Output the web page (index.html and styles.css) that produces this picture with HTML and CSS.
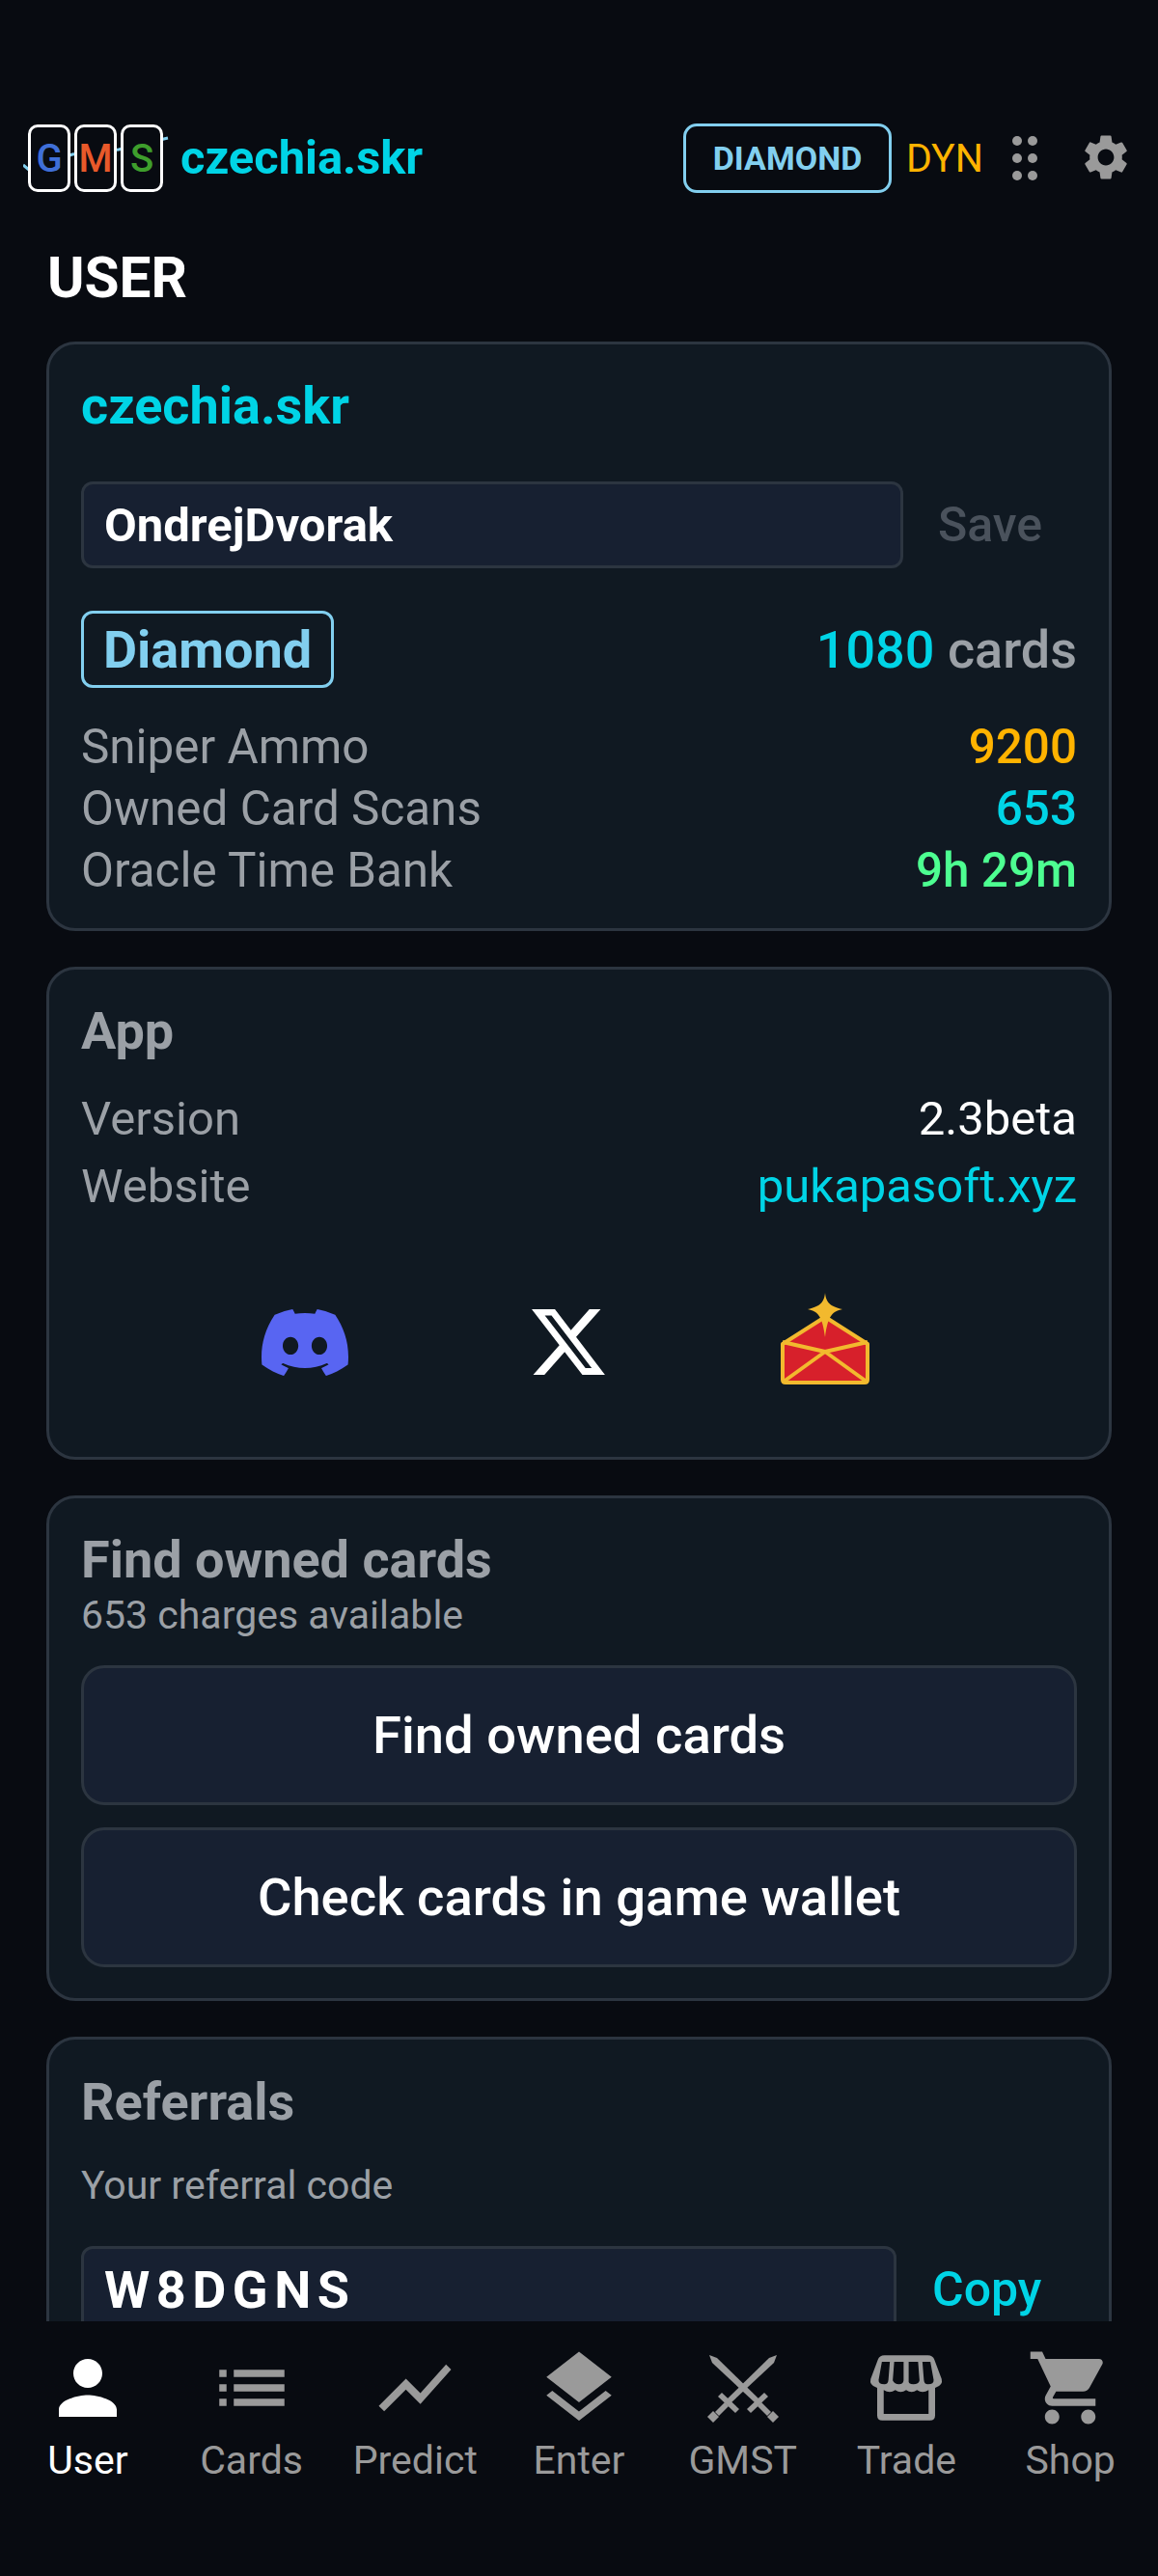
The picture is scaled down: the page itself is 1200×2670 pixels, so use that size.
FILE: index.html
```html
<!DOCTYPE html>
<html lang="en">
<head>
<meta charset="utf-8">
<title>USER</title>
<link rel="stylesheet" href="styles.css">
</head>
<body>
<div class="app">
  <header class="topbar">
    <div class="logo">
      <svg class="logo-line" viewBox="0 0 156 40"><path d="M0 30 L6 35 L51 19 L99 14 L150 2" fill="none" stroke="#82cfef" stroke-width="3"/></svg>
      <span class="tile tile-g">G</span><span class="tile tile-m">M</span><span class="tile tile-s">S</span>
    </div>
    <span class="brand">czechia.skr</span>
    <span class="tier">DIAMOND</span>
    <span class="dyn">DYN</span>
    <svg class="dots" viewBox="0 0 26 46"><g fill="#9a9a9a"><circle cx="5" cy="5" r="5"/><circle cx="21" cy="5" r="5"/><circle cx="5" cy="23" r="5"/><circle cx="21" cy="23" r="5"/><circle cx="5" cy="41" r="5"/><circle cx="21" cy="41" r="5"/></g></svg>
    <svg class="gear" viewBox="0 0 24 24"><path fill="#9a9a9a" d="M19.14 12.94c.04-.3.06-.61.06-.94 0-.32-.02-.64-.07-.94l2.03-1.58c.18-.14.23-.41.12-.61l-1.92-3.32c-.12-.22-.37-.29-.59-.22l-2.39.96c-.5-.38-1.03-.7-1.62-.94l-.36-2.54c-.04-.24-.24-.41-.48-.41h-3.84c-.24 0-.43.17-.47.41l-.36 2.54c-.59.24-1.13.57-1.62.94l-2.39-.96c-.22-.08-.47 0-.59.22L2.74 8.87c-.12.21-.08.47.12.61l2.03 1.58c-.05.3-.09.63-.09.94s.02.64.07.94l-2.03 1.58c-.18.14-.23.41-.12.61l1.92 3.32c.12.22.37.29.59.22l2.39-.96c.5.38 1.03.7 1.62.94l.36 2.54c.05.24.24.41.48.41h3.84c.24 0 .44-.17.47-.41l.36-2.54c.59-.24 1.13-.56 1.62-.94l2.39.96c.22.08.47 0 .59-.22l1.92-3.32c.12-.22.07-.47-.12-.61l-2.01-1.58zM12 15.6c-1.98 0-3.6-1.62-3.6-3.6s1.62-3.6 3.6-3.6 3.6 1.62 3.6 3.6-1.62 3.6-3.6 3.6z"/></svg>
  </header>

  <main class="content">
    <h1 class="page-title">USER</h1>

    <section class="card card-user">
      <h2 class="user-name">czechia.skr</h2>
      <div class="field-row">
        <div class="field field-name">OndrejDvorak</div>
        <span class="save">Save</span>
      </div>
      <div class="tier-row">
        <span class="tier-large">Diamond</span>
        <span class="count"><b>1080</b> cards</span>
      </div>
      <div class="stat"><span>Sniper Ammo</span><span class="num amber">9200</span></div>
      <div class="stat"><span>Owned Card Scans</span><span class="num cyan">653</span></div>
      <div class="stat"><span>Oracle Time Bank</span><span class="num green">9h 29m</span></div>
    </section>

    <section class="card card-app">
      <h2 class="card-title">App</h2>
      <div class="info"><span>Version</span><span class="white">2.3beta</span></div>
      <div class="info"><span>Website</span><span class="cyan">pukapasoft.xyz</span></div>
      <div class="socials">
        <svg class="discord" viewBox="0 2.85 24 18.3" preserveAspectRatio="none"><path fill="#5865f2" d="M20.317 4.3698a19.7913 19.7913 0 00-4.8851-1.5152.0741.0741 0 00-.0785.0371c-.211.3753-.4447.8648-.6083 1.2495-1.8447-.2762-3.68-.2762-5.4868 0-.1636-.3933-.4058-.8742-.6177-1.2495a.077.077 0 00-.0785-.037 19.7363 19.7363 0 00-4.8852 1.515.0699.0699 0 00-.0321.0277C.5334 9.0458-.319 13.5799.0992 18.0578a.0824.0824 0 00.0312.0561c2.0528 1.5076 4.0413 2.4228 5.9929 3.0294a.0777.0777 0 00.0842-.0276c.4616-.6304.8731-1.2952 1.226-1.9942a.076.076 0 00-.0416-.1057c-.6528-.2476-1.2743-.5495-1.8722-.8923a.077.077 0 01-.0076-.1277c.1258-.0943.2517-.1923.3718-.2914a.0743.0743 0 01.0776-.0105c3.9278 1.7933 8.18 1.7933 12.0614 0a.0739.0739 0 01.0785.0095c.1202.099.246.1981.3728.2924a.077.077 0 01-.0066.1276 12.2986 12.2986 0 01-1.873.8914.0766.0766 0 00-.0407.1067c.3604.698.7719 1.3628 1.225 1.9932a.076.076 0 00.0842.0286c1.961-.6067 3.9495-1.5219 6.0023-3.0294a.077.077 0 00.0313-.0552c.5004-5.177-.8382-9.6739-3.5485-13.6604a.061.061 0 00-.0312-.0286zM8.02 15.3312c-1.1825 0-2.1569-1.0857-2.1569-2.419 0-1.3332.9555-2.4189 2.157-2.4189 1.2108 0 2.1757 1.0952 2.1568 2.419 0 1.3332-.9555 2.4189-2.1569 2.4189zm7.9748 0c-1.1825 0-2.1569-1.0857-2.1569-2.419 0-1.3332.9554-2.4189 2.1569-2.4189 1.2108 0 2.1757 1.0952 2.1568 2.419 0 1.3332-.946 2.4189-2.1568 2.4189Z"/></svg>
        <svg class="x-logo" viewBox="1.25 2.25 21.6 19.5" preserveAspectRatio="none"><path fill="#fff" d="M18.244 2.25h3.308l-7.227 8.26 8.502 11.24H16.17l-5.214-6.817L4.99 21.75H1.68l7.73-8.835L1.254 2.25H8.08l4.713 6.231zm-1.161 17.52h1.833L7.084 4.126H5.117z"/></svg>
        <svg class="mail" viewBox="0 0 92 96"><path d="M2 53 L46 25 L90 53 V90 Q90 93 87 93 H5 Q2 93 2 90Z" fill="#d7202b" stroke="#f2b92e" stroke-width="4" stroke-linejoin="round"/><path d="M2 51 L46 61 L90 51 M3 92 L46 61 L89 92" fill="none" stroke="#f2b92e" stroke-width="4" stroke-linejoin="round"/><path d="M46 0 C47 9 50 14 64 17 C54 19 49 23 46 46 C43 23 38 19 28 17 C42 14 45 9 46 0Z" fill="#f2b92e"/></svg>
      </div>
    </section>

    <section class="card card-find">
      <h2 class="card-title">Find owned cards</h2>
      <p class="sub">653 charges available</p>
      <button class="action">Find owned cards</button>
      <button class="action">Check cards in game wallet</button>
    </section>

    <section class="card card-ref">
      <h2 class="card-title">Referrals</h2>
      <p class="ref-label">Your referral code</p>
      <div class="field-row">
        <div class="field field-code">W8DGNS</div>
        <span class="copy">Copy</span>
      </div>
    </section>
  </main>

  <nav class="tabs">
    <div class="tab tab-on"><svg viewBox="0 0 24 24"><path d="M12 12c2.21 0 4-1.79 4-4s-1.79-4-4-4-4 1.79-4 4 1.79 4 4 4zm0 2c-2.67 0-8 1.34-8 4v2h16v-2c0-2.66-5.33-4-8-4z"/></svg><span>User</span></div>
    <div class="tab"><svg viewBox="0 0 24 24"><path d="M3 13h2v-2H3v2zm0 4h2v-2H3v2zm0-8h2V7H3v2zm4 4h14v-2H7v2zm0 4h14v-2H7v2zM7 7v2h14V7H7z"/></svg><span>Cards</span></div>
    <div class="tab"><svg viewBox="0 0 24 24"><path d="M3.5 18.49l6-6.01 4 4L22 6.92l-1.41-1.41-7.09 7.97-4-4L2 16.99z"/></svg><span>Predict</span></div>
    <div class="tab"><svg viewBox="0 0 24 24"><path d="M11.99 18.54l-7.37-5.73L3 14.07l9 7 9-7-1.63-1.27-7.38 5.74zM12 16l7.36-5.73L21 9l-9-7-9 7 1.63 1.27L12 16z"/></svg><span>Enter</span></div>
    <div class="tab"><svg viewBox="0 0 90 90">
      <g><path d="M10 11 L18 14 L62 57 L58 61 L13 19Z"/><path d="M49 67 L67 50 L71 54 L53 71Z"/><path d="M60 64 L64 60 L74 70 L70 74Z"/><path d="M76 69 L82 75 L76 81 L70 75Z"/></g>
      <g transform="translate(90 0) scale(-1 1)"><path d="M10 11 L18 14 L62 57 L58 61 L13 19Z"/><path d="M49 67 L67 50 L71 54 L53 71Z"/><path d="M60 64 L64 60 L74 70 L70 74Z"/><path d="M76 69 L82 75 L76 81 L70 75Z"/></g>
    </svg><span>GMST</span></div>
    <div class="tab"><svg viewBox="0 0 24 24"><path fill-rule="evenodd" d="M6 3H18Q19.400 3 19.800 4.200L21.800 9.500Q22.300 11.200 20 12V19.600Q20 21 18.600 21H5.400Q4 21 4 19.600V12Q1.700 11.200 2.200 9.500L4.200 4.200Q4.600 3 6 3ZM5.300 4.800H7.500L7.100 9.800Q7 11 6 11Q4.300 11 4.400 9.800ZM8.700 4.800H11.300V9.900Q11.200 11 10 11T8.300 9.900ZM12.700 4.800H15.300L15.700 9.900Q15.500 11 14 11T12.700 9.900ZM16.500 4.800H18.700L19.600 9.800Q19.700 11 18 11Q17 11 16.900 9.800ZM5.800 12.600Q7.500 13.600 9 12.600Q10.500 13.600 12 12.600Q13.500 13.600 15 12.600Q16.500 13.600 18.200 12.600V19.200H5.800Z"/></svg><span>Trade</span></div>
    <div class="tab"><svg viewBox="0 0 24 24"><path d="M7 18c-1.100 0-1.990.9-1.990 2S5.900 22 7 22s2-.9 2-2-.9-2-2-2zM1 2v2h2l3.600 7.590-1.350 2.450c-.16.28-.25.61-.25.96 0 1.100.9 2 2 2h12v-2H7.420c-.14 0-.25-.11-.25-.25l.03-.12.9-1.630h7.450c.75 0 1.410-.41 1.750-1.030l3.580-6.490c.08-.14.12-.31.12-.48 0-.55-.45-1-1-1H5.210l-.94-2H1zm16 16c-1.100 0-1.990.9-1.990 2s.89 2 1.990 2 2-.9 2-2-.9-2-2-2z"/></svg><span>Shop</span></div>
  </nav>
</div>
</body>
</html>
```
FILE: styles.css
```css
* { box-sizing: border-box; }
html, body { margin: 0; padding: 0; }
body { background: #080b11; color: #fff; font-family: Roboto, "Noto Sans", sans-serif; }
h1, h2, p { margin: 0; }
.app { width: 1200px; height: 2670px; display: flex; flex-direction: column; overflow: hidden; }

.topbar { height: 246px; padding: 129px 26px 0 29px; display: flex; align-items: flex-start; flex: none; }
.logo { position: relative; display: flex; gap: 4px; height: 70px; margin-right: 18px; }
.logo-line { position: absolute; left: -5px; top: 12px; width: 156px; height: 40px; }
.tile { position: relative; width: 44px; height: 70px; background: #080b11; border: 3px solid #fff; border-radius: 10px; display: flex; align-items: center; justify-content: center; font-size: 40px; font-weight: 500; }
.tile-g { color: #3f6fd8; }
.tile-m { color: #e8592a; }
.tile-s { color: #3e9e2c; }
.brand { font-size: 48.800px; font-weight: 700; color: #00d4e6; line-height: 70px; margin-right: auto; }
.tier { width: 216px; height: 72px; margin-top: -1px; border: 3px solid #82cfef; border-radius: 14px; color: #82cfef; font-size: 34px; font-weight: 700; display: flex; align-items: center; justify-content: center; }
.dyn { margin-left: 15px; font-size: 41px; color: #ffb300; line-height: 70px; width: 80px; }
.dots { width: 26px; height: 46px; margin: 12px 0 0 30px; }
.gear { width: 56px; height: 56px; margin: 6px 0 0 43px; }

.content { flex: 1; min-height: 0; overflow: hidden; padding: 0 48px; }
.page-title { font-size: 58.500px; font-weight: 700; line-height: 64px; margin: 10px 0 34px 1px; }
.card { background: #101922; border: 3px solid #2c3540; border-radius: 30px; padding: 0 33px; margin-bottom: 37px; }
.card-user { height: 611px; padding-top: 27px; }
.user-name { font-size: 54px; font-weight: 700; color: #00d4e6; line-height: 74px; margin-bottom: 41px; }
.field-row { display: flex; align-items: center; }
.field { flex: none; height: 90px; background: #172031; border: 3px solid #2c3540; border-radius: 12px; padding: 0 21px; display: flex; align-items: center; color: #fff; font-weight: 700; }
.field-name { width: 852px; font-size: 49px; }
.save { margin-left: 36px; font-size: 50px; font-weight: 500; color: #4a525c; }
.tier-row { display: flex; justify-content: space-between; align-items: center; margin: 44px 0 29px; height: 80px; }
.tier-large { width: 262px; height: 80px; border: 3px solid #82cfef; border-radius: 12px; color: #82cfef; font-size: 54px; font-weight: 700; display: flex; align-items: center; justify-content: center; }
.count { font-size: 54px; font-weight: 500; color: #9ba0a6; }
.count b { font-weight: 500; color: #00d4e6; }
.stat { display: flex; justify-content: space-between; font-size: 49.400px; line-height: 64px; color: #9ba0a6; }
.num { font-weight: 500; }
.amber { color: #ffb300; }
.cyan { color: #00d4e6; }
.green { color: #4dff91; }
.white { color: #fff; }

.card-app { height: 511px; padding-top: 30px; }
.card-title { font-size: 54px; font-weight: 700; color: #9ba0a6; line-height: 68px; }
.info { display: flex; justify-content: space-between; font-size: 49px; line-height: 70px; color: #9ba0a6; }
.card-app .card-title { margin-bottom: 22px; }
.socials { height: 110px; margin-top: 75px; display: flex; align-items: flex-start; }
.discord { width: 90px; height: 69px; margin: 17px 0 0 187px; }
.x-logo { width: 76px; height: 68px; margin: 17px 0 0 190px; }
.mail { width: 94px; height: 96px; margin: 0 0 0 181px; }

.card-find { height: 524px; padding-top: 30px; }
.sub { font-size: 41px; line-height: 46px; color: #9ba0a6; margin-bottom: 29px; }
.action { display: block; width: 100%; height: 145px; margin: 0 0 23px; background: #172031; border: 3px solid #2c3540; border-radius: 24px; color: #fff; font: 500 54.400px Roboto, sans-serif; }

.card-ref { height: 500px; padding-top: 31px; }
.ref-label { font-size: 41px; line-height: 50px; color: #9ba0a6; margin: 27px 0 38px; }
.field-code { width: 845px; font-size: 54px; letter-spacing: 6.500px; }
.copy { margin-left: 37px; font-size: 50px; font-weight: 500; color: #00d4e6; }

.tabs { flex: none; height: 264px; background: #080b11; display: grid; grid-template-columns: repeat(7, 1fr); padding: 24px 6px 0 6px; }
.tab { display: flex; flex-direction: column; align-items: center; color: #9a9a9a; font-size: 41px; line-height: 48px; }
.tab svg { width: 90px; height: 90px; fill: #9a9a9a; margin-bottom: 6px; }
.tab-on { color: #fff; }
.tab-on svg { fill: #fff; }
```
